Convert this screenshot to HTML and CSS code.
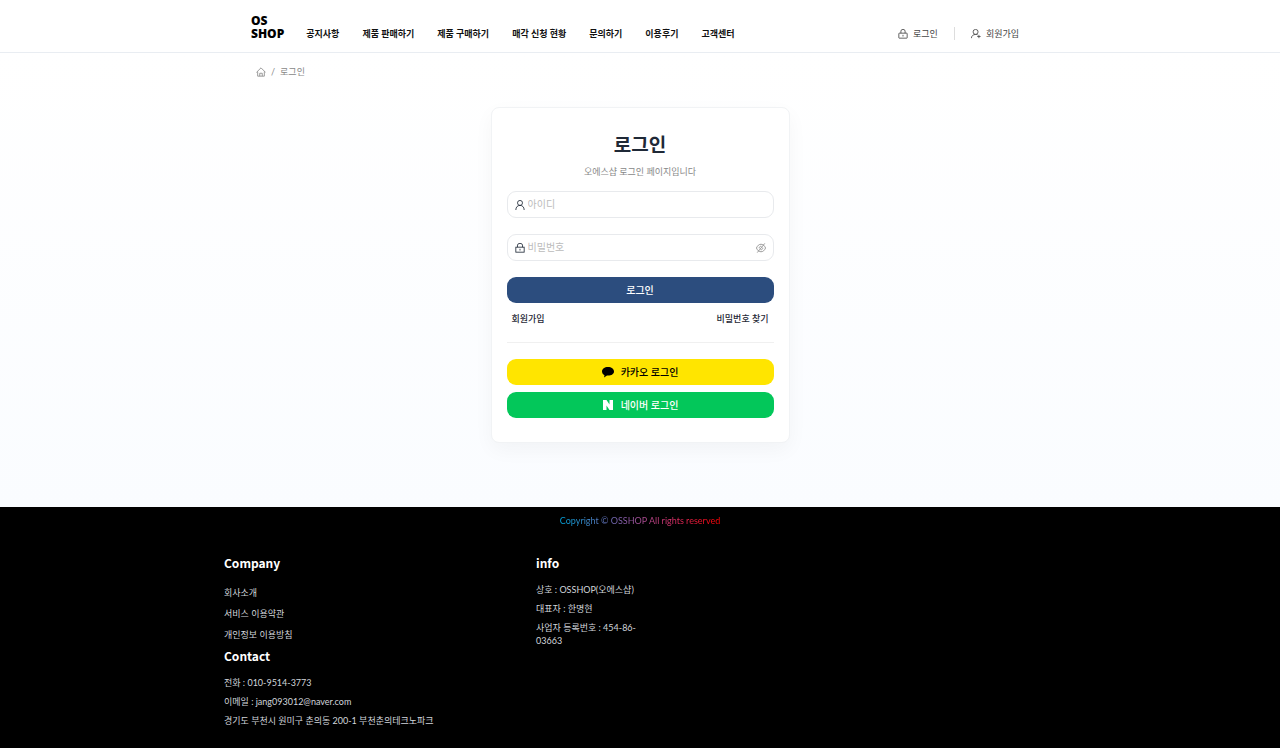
FILE: index.html
```
<!DOCTYPE html>
<html lang="ko">
<head>
    <meta charset="UTF-8">
    <meta name="viewport" content="width=device-width, initial-scale=1.0">
    <title>로그인 - OSSHOP</title>
    <link rel="stylesheet" href="styles.css">
</head>
<body>
    <header class="header">
        <div class="header-inner">
            <a class="logo" href="#">OS<br>SHOP</a>
            <nav class="nav">
                <a href="#">공지사항</a>
                <a href="#">제품 판매하기</a>
                <a href="#">제품 구매하기</a>
                <a href="#">매각 신청 현황</a>
                <a href="#">문의하기</a>
                <a href="#">이용후기</a>
                <a href="#">고객센터</a>
            </nav>
            <div class="user-menu">
                <a href="#">
                    <svg class="icon" viewBox="0 0 24 24"><rect x="2" y="10" width="20" height="12" rx="1"/><path d="M7 10V5a5 4 0 0 1 10 0v5M12 14v4"/></svg>
                    로그인
                </a>
                <a href="#">
                    <svg class="icon" viewBox="0 0 24 24"><circle cx="11" cy="7" r="6"/><path d="M1 22c0-5 4-9 10-9 2 0 4 0 5 1M19 14v8M15 18h8"/></svg>
                    회원가입
                </a>
            </div>
        </div>
    </header>

    <main class="main">
        <nav class="breadcrumb" aria-label="breadcrumb">
            <a href="#" aria-label="홈">
                <svg class="icon" viewBox="0 0 24 24"><path d="M1 13 12 2l11 11M4 11v11h16V11M9 22v-7h6v7"/></svg>
            </a>
            <span>/</span>
            <span>로그인</span>
        </nav>

        <section class="card">
            <h1>로그인</h1>
            <p class="subtitle">오에스샵 로그인 페이지입니다</p>

            <form>
                <div class="field">
                    <svg class="icon" viewBox="0 0 24 24"><circle cx="12" cy="7" r="6"/><path d="M2 24c0-7 4-11 10-11s10 4 10 11"/></svg>
                    <input type="text" placeholder="아이디" aria-label="아이디">
                </div>
                <div class="field">
                    <svg class="icon" viewBox="0 0 24 24"><rect x="2" y="10" width="20" height="12"/><path d="M6 10V5a6 4 0 0 1 12 0v5M12 14v4"/></svg>
                    <input type="password" placeholder="비밀번호" aria-label="비밀번호">
                    <button class="toggle" type="button" aria-label="비밀번호 표시">
                        <svg class="icon" viewBox="0 0 24 24"><path d="M1 12c3-6 6-9 11-9s8 3 11 9c-3 6-6 9-11 9s-8-3-11-9zM21 1 3 23"/><path d="M8 13a4 4 0 0 1 5-5M16 11a4 4 0 0 1-5 5"/></svg>
                    </button>
                </div>
                <button class="btn btn-login" type="submit">로그인</button>
            </form>

            <div class="links">
                <a href="#">회원가입</a>
                <a href="#">비밀번호 찾기</a>
            </div>

            <div class="social">
                <button class="btn btn-kakao" type="button">
                    <svg viewBox="0 0 24 24"><path d="M12 2C5 2 0 6 0 11c0 3 2 6 5 7.500L4 23l6-4h2c7 0 12-3 12-8s-5-9-12-9z"/></svg>
                    카카오 로그인
                </button>
                <button class="btn btn-naver" type="button">
                    <svg viewBox="0 0 24 24"><path d="M2 2h7l6 9V2h7v20h-7l-6-9v9H2z"/></svg>
                    네이버 로그인
                </button>
            </div>
        </section>
    </main>

    <footer class="footer">
        <p class="copyright"><span>Copyright © OSSHOP All rights reserved</span></p>
        <div class="footer-grid">
            <div>
                <h2>Company</h2>
                <ul class="footer-links">
                    <li><a href="#">회사소개</a></li>
                    <li><a href="#">서비스 이용약관</a></li>
                    <li><a href="#">개인정보 이용방침</a></li>
                </ul>
                <h2>Contact</h2>
                <p>전화 : 010-9514-3773</p>
                <p>이메일 : jang093012@naver.com</p>
                <p>경기도 부천시 원미구 춘의동 200-1 부천춘의테크노파크</p>
            </div>
            <div>
                <h2>info</h2>
                <p>상호 : OSSHOP(오에스샵)</p>
                <p>대표자 : 한명현</p>
                <p>사업자 등록번호 : 454-86-03663</p>
            </div>
        </div>
    </footer>
</body>
</html>
```
FILE: styles.css
```
* {
    box-sizing: border-box;
}

body {
    margin: 0;
    min-height: 100vh;
    display: flex;
    flex-direction: column;
    font-family: Lato, "Noto Sans CJK KR", sans-serif;
    font-size: 9px;
    line-height: 13px;
    color: #1f2937;
    background: #fff;
}

a {
    color: inherit;
    text-decoration: none;
}

h1, h2, p, ul {
    margin: 0;
    padding: 0;
}

.icon {
    display: block;
    flex: none;
    width: 10px;
    height: 10px;
    fill: none;
    stroke: currentColor;
    stroke-width: 2;
}

/* Header */
.header {
    border-bottom: 1px solid #e9edf2;
}

.header-inner {
    display: flex;
    align-items: flex-end;
    max-width: 780px;
    height: 52px;
    margin: 0 auto;
    padding: 0 11px 12px 1px;
}

.logo {
    margin-right: 22px;
    font-family: "Open Sans", sans-serif;
    font-size: 12px;
    line-height: 13px;
    font-weight: 800;
    color: #000;
}

.nav {
    display: flex;
    gap: 23px;
    font-weight: 700;
    color: #111;
}

.user-menu {
    display: flex;
    margin-left: auto;
    color: #444;
}

.user-menu a {
    display: flex;
    align-items: center;
    gap: 5px;
}

.user-menu a + a {
    margin-left: 16px;
    padding-left: 16px;
    border-left: 1px solid #ddd;
}

/* Login */
.main {
    flex: 1 0 auto;
    padding: 12px 16px 64px;
    background: linear-gradient(#fff, #fafcff);
}

.breadcrumb {
    display: flex;
    align-items: center;
    gap: 5px;
    max-width: 768px;
    margin: 0 auto 29px;
    color: #888;
}

.card {
    max-width: 299px;
    margin: 0 auto;
    padding: 23px 15px 24px;
    background: #fff;
    border: 1px solid #f1f3f5;
    border-radius: 8px;
    box-shadow: 0 7px 20px rgba(0, 0, 0, 0.04);
}

.card h1 {
    font-size: 19px;
    line-height: 28px;
    font-weight: 700;
    text-align: center;
}

.subtitle {
    margin: 6px 0 13px;
    text-align: center;
    color: #888;
}

.field {
    display: flex;
    align-items: center;
    gap: 3px;
    height: 27px;
    margin-bottom: 16px;
    padding: 0 7px;
    border: 1px solid #e8eaed;
    border-radius: 9px;
}

.field input {
    flex: 1;
    min-width: 0;
    padding: 0;
    border: 0;
    outline: 0;
    background: none;
    font: inherit;
    font-size: 10px;
}

.field input::placeholder {
    color: #bbb;
}

.toggle {
    padding: 0;
    border: 0;
    background: none;
    color: #888;
}

.btn {
    display: flex;
    align-items: center;
    justify-content: center;
    gap: 7px;
    width: 100%;
    height: 26px;
    padding: 0;
    border: 0;
    border-radius: 9px;
    font-family: inherit;
    font-size: 10px;
    line-height: 13px;
    font-weight: 500;
    cursor: pointer;
}

.btn svg {
    width: 12px;
    height: 12px;
    fill: currentColor;
}

.btn-login {
    background: #2c4d7e;
    color: #fff;
}

.btn-kakao {
    background: #ffe500;
    color: #000;
}

.btn-naver {
    background: #03c75a;
    color: #fff;
}

.links {
    display: flex;
    justify-content: space-between;
    padding: 9px 5px 17px;
    font-weight: 500;
}

.social {
    display: flex;
    flex-direction: column;
    gap: 7px;
    padding-top: 16px;
    border-top: 1px solid #f0f0f0;
}

/* Footer */
.footer {
    padding: 7px 16px 21px;
    background: #000;
    color: #d1d5db;
}

.copyright {
    text-align: center;
}

.copyright span {
    background: linear-gradient(to right, #00a7e1, #8b5fad 40%, #d8316b 70%, #f00);
    background-clip: text;
    -webkit-background-clip: text;
    color: transparent;
}

.footer-grid {
    display: grid;
    grid-template-columns: 3fr 1fr 4fr;
    max-width: 832px;
    margin: 26px auto 0;
}

.footer h2 {
    margin-bottom: 10px;
    font-family: "Noto Sans CJK KR", sans-serif;
    font-size: 12px;
    line-height: 20px;
    font-weight: 700;
    color: #fff;
}

.footer-grid p + p {
    margin-top: 6px;
}

.footer-links {
    display: grid;
    gap: 8px;
    padding: 3px 0 5px;
    list-style: none;
}
```
